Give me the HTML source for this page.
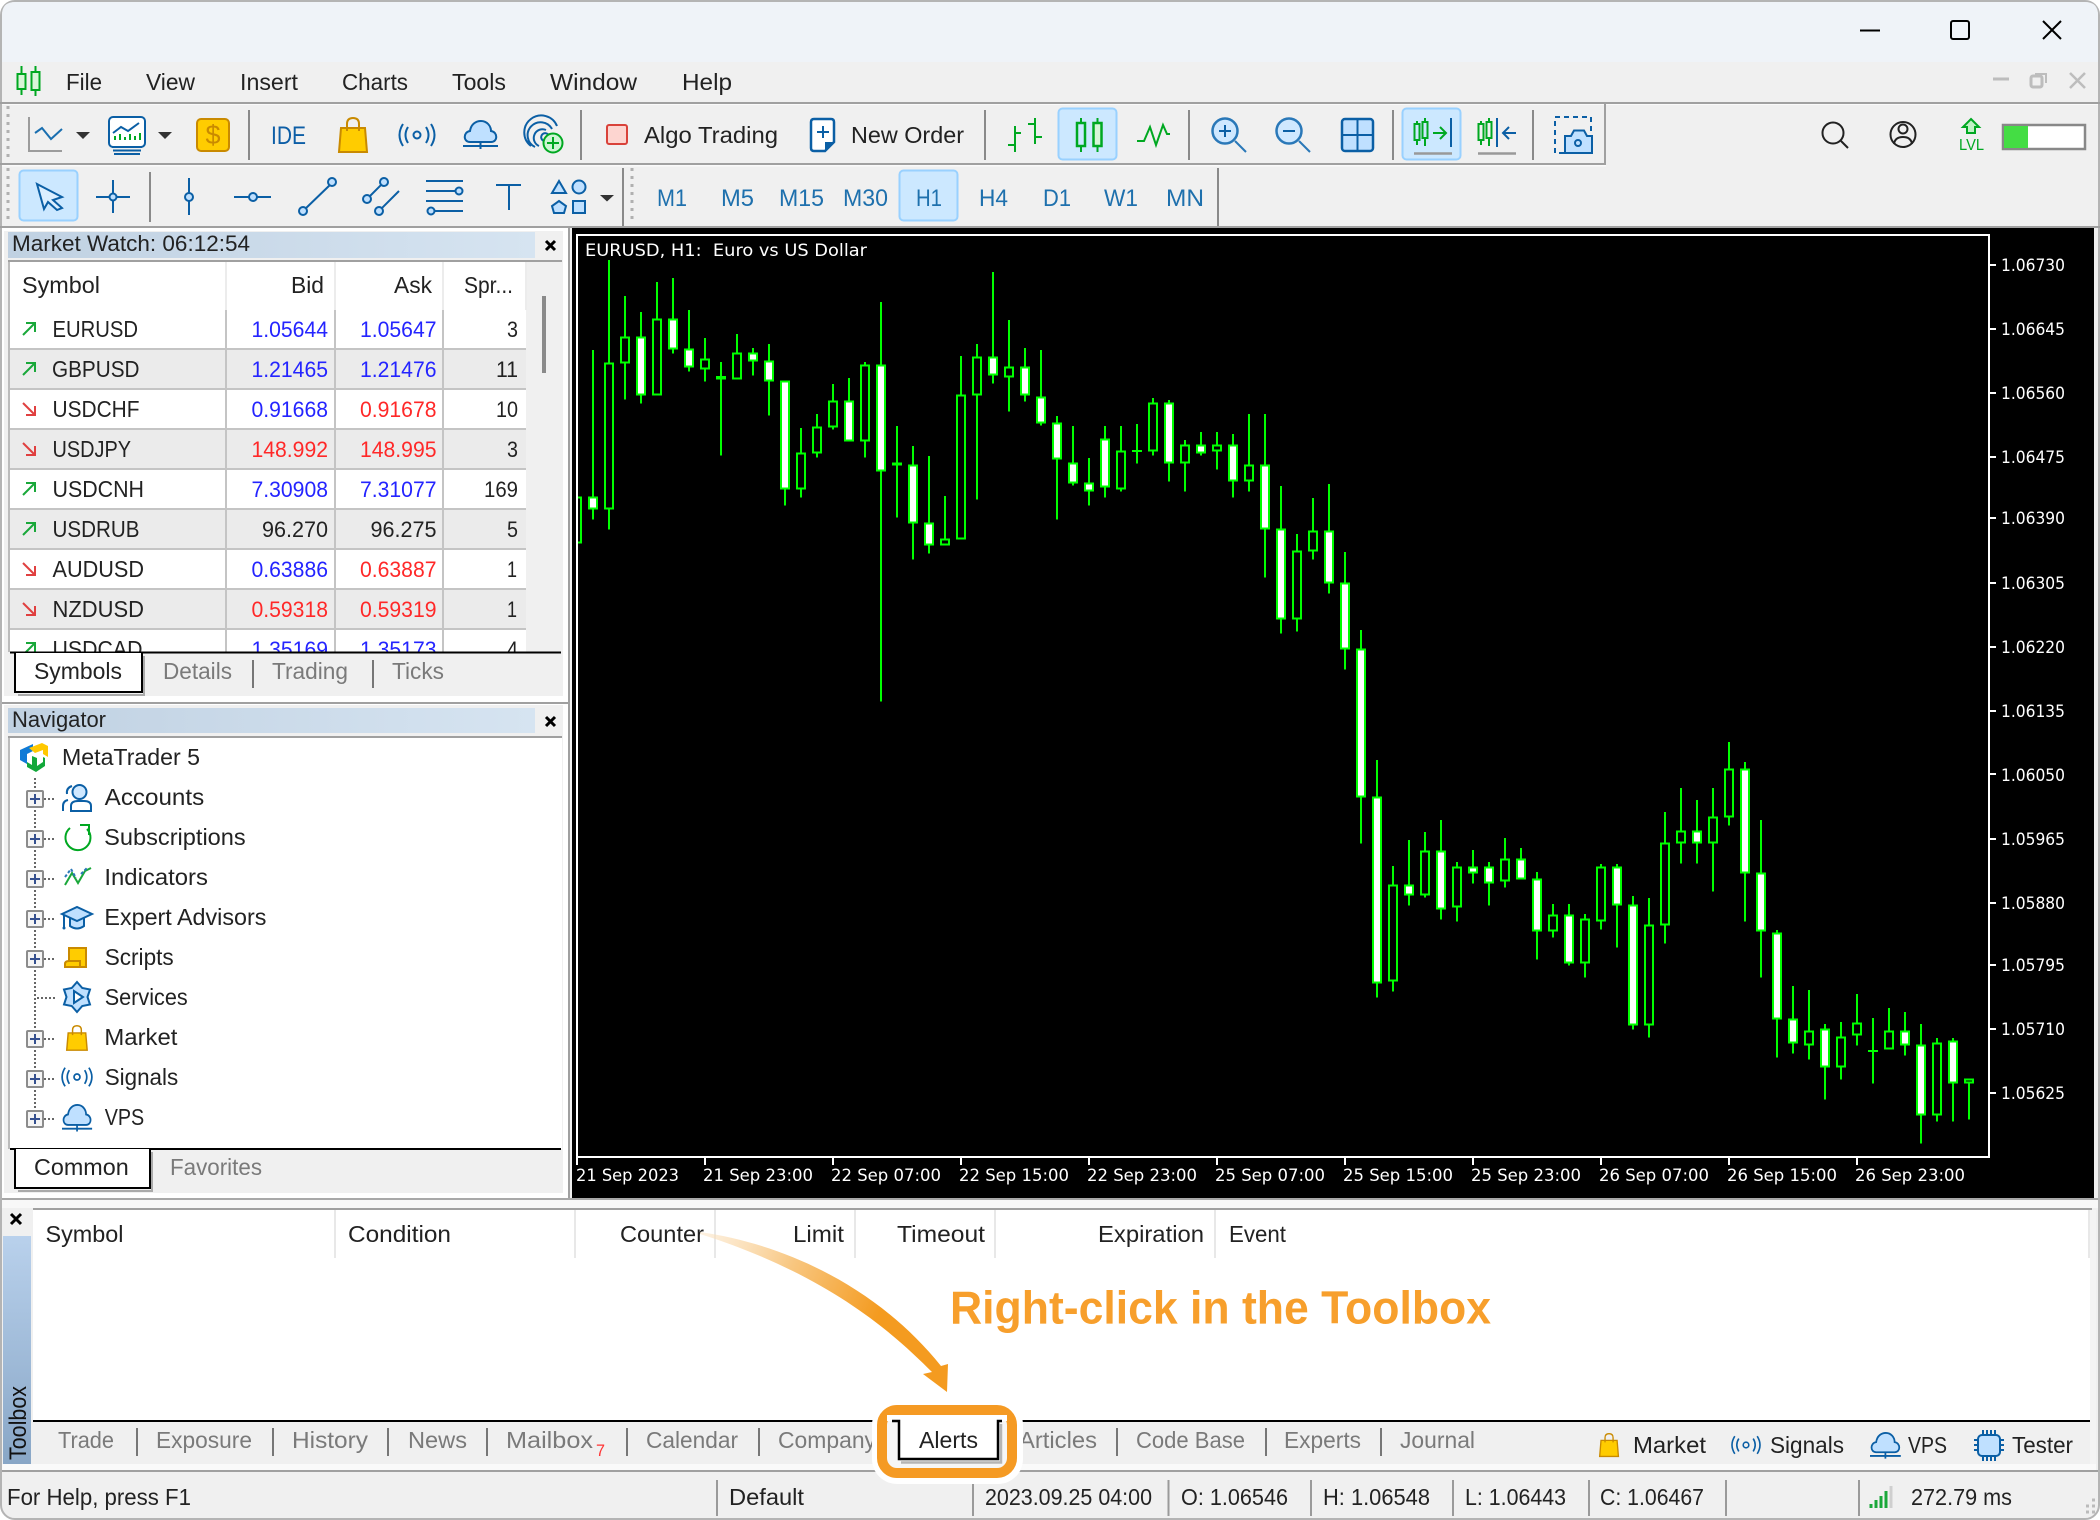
<!DOCTYPE html>
<html lang="en"><head><meta charset="utf-8"><title>MetaTrader 5 - Alerts</title>
<style>
html,body{margin:0;padding:0;background:#fff;width:2100px;height:1520px;overflow:hidden}
svg{display:block}
text{font-family:"Liberation Sans",sans-serif;font-size:23.5px;fill:#222;white-space:pre}
.g{fill:#7a7a7a}
.n{font-size:22px}
.bl{fill:#2424ff}
.rd{fill:#ff2828}
.tf{fill:#1e70ad;font-size:24px}
.ttl{font-size:22px}
.ax{font-family:"DejaVu Sans",sans-serif;font-size:17px;fill:#fff}
.cap{font-size:46px;font-weight:700;fill:#f79f2c}
.i{fill:none;stroke:#0b5fa5;stroke-width:2}
.il{fill:#bfe0ff;stroke:#0b5fa5;stroke-width:2}
.gr{fill:none;stroke:#00a821;stroke-width:2}
.sp{stroke:#8a8a8a;stroke-width:2;fill:none}
.sl{stroke:#a0a0a0;stroke-width:2;fill:none}
</style></head><body>
<svg width="2100" height="1520" viewBox="0 0 2100 1520" xmlns="http://www.w3.org/2000/svg">
<defs>
<linearGradient id="tb" x1="0" x2="1" y1="0" y2="0"><stop offset="0" stop-color="#c0d1e2"/><stop offset="1" stop-color="#d6e4f1"/></linearGradient>
<linearGradient id="sb" x1="0" x2="0" y1="0" y2="1"><stop offset="0" stop-color="#b9d1ec"/><stop offset="1" stop-color="#88a6c6"/></linearGradient>
<linearGradient id="ag" gradientUnits="userSpaceOnUse" x1="700" y1="1233" x2="880" y2="1310"><stop offset="0" stop-color="#fbe3c2" stop-opacity=".5"/><stop offset=".5" stop-color="#f8c67f"/><stop offset="1" stop-color="#f49b20"/></linearGradient>
<g id="cloud"><path d="M7 22C0 22 0 12 7 11C8 4 13 1 18 1C24 1 28 6 28 11C35 12 35 22 28 22Z" class="il"/><path d="M17.5 22V29M0 26H35" class="i"/></g>
<g id="bag"><path d="M3 11H27L29 35H1Z" fill="#ffcc00" stroke="#c98a00" stroke-width="2"/><path d="M9 14V7Q9 1 15 1Q21 1 21 7V14" fill="none" stroke="#c98a00" stroke-width="2"/></g>
<g id="sig"><circle cx="0" cy="0" r="3.5" class="i"/><path d="M-9 -8Q-14 0 -9 8M-14 -11Q-21 0 -14 11M9 -8Q14 0 9 8M14 -11Q21 0 14 11" class="i" stroke="#2a78b8"/></g>
<path id="up" d="M1 13L13 1M4 1H13V10" fill="none" stroke="#1aa83a" stroke-width="2"/>
<path id="dn" d="M1 1L13 13M13 4V13H4" fill="none" stroke="#e04040" stroke-width="2"/>
<g id="pb"><rect x="-8" y="-8" width="16" height="16" rx="1" fill="#f4f4f4" stroke="#8c8c8c" stroke-width="2"/><path d="M-5 0H5M0 -5V5" stroke="#35508f" stroke-width="2"/><path d="M9 0H20" stroke="#666" stroke-width="2" stroke-dasharray="2 2"/></g>
</defs>

<!-- window -->
<rect x="1" y="1" width="2098" height="1518" rx="14" fill="#f0f0f0" stroke="#b4b4b4" stroke-width="2"/>
<path d="M2 62V15Q2 2 15 2H2085Q2098 2 2098 15V62Z" fill="#eff3f8"/>

<!-- window controls -->
<path d="M1860 30.500H1880" stroke="#000" stroke-width="2"/>
<rect x="1951" y="21" width="18" height="18" rx="2" fill="none" stroke="#000" stroke-width="2"/>
<path d="M2043 21L2061 39M2061 21L2043 39" stroke="#000" stroke-width="2"/>

<!-- menu -->
<path d="M21.500 66V74M21.500 89V95M35.500 66V72M35.500 90V96" class="gr"/>
<rect x="17.500" y="74" width="8" height="15" fill="#d8f5d8" stroke="#00a821" stroke-width="2"/>
<rect x="31.500" y="72" width="8" height="18" fill="#d8f5d8" stroke="#00a821" stroke-width="2"/>
<text x="66" y="90" textLength="36" lengthAdjust="spacingAndGlyphs">File</text>
<text x="146" y="90" textLength="49" lengthAdjust="spacingAndGlyphs">View</text>
<text x="240" y="90" textLength="58" lengthAdjust="spacingAndGlyphs">Insert</text>
<text x="342" y="90" textLength="66" lengthAdjust="spacingAndGlyphs">Charts</text>
<text x="452" y="90" textLength="54" lengthAdjust="spacingAndGlyphs">Tools</text>
<text x="550" y="90" textLength="87" lengthAdjust="spacingAndGlyphs">Window</text>
<text x="682" y="90" textLength="50" lengthAdjust="spacingAndGlyphs">Help</text>
<path d="M1993 79H2009" stroke="#bdbdbd" stroke-width="3"/>
<rect x="2031" y="76" width="11" height="11" rx="2" fill="none" stroke="#bdbdbd" stroke-width="3"/><path d="M2035 74H2046V83" fill="none" stroke="#bdbdbd" stroke-width="2"/>
<path d="M2070 73L2085 88M2085 73L2070 88" stroke="#bdbdbd" stroke-width="2.500"/>
<rect x="0" y="102" width="2100" height="2" fill="#a0a0a0"/><rect x="2" y="104" width="2096" height="1" fill="#fafafa"/>

<!-- toolbar 1 -->
<path d="M8 106V160M8 168V222" stroke="#b0b0b0" stroke-width="3" stroke-dasharray="3 5" fill="none"/>
<path d="M29 117V151H62" fill="none" stroke="#9c9c9c" stroke-width="2"/>
<path d="M35 133L42 128L51 139L62 129" fill="none" stroke="#1a6fb0" stroke-width="2"/>
<path d="M76 132H90L83 139Z" fill="#333"/>
<rect x="109" y="117" width="36" height="30" rx="4" fill="#fff" stroke="#0b5fa5" stroke-width="2"/>
<path d="M113 133L121 127L128 131L139 123" fill="none" stroke="#0b5fa5" stroke-width="2"/>
<path d="M115 140V136M120 140V134M125 140V137M130 140V134M135 140V136M140 140V133" stroke="#00a821" stroke-width="2"/>
<path d="M112 147H142M113 150.500H141M114 154H140" stroke="#0b5fa5" stroke-width="2"/>
<path d="M158 132H172L165 139Z" fill="#333"/>
<rect x="197" y="119" width="32" height="32" rx="4" fill="#ffcc00" stroke="#c98a00" stroke-width="2"/>
<text x="213" y="144" text-anchor="middle" style="font-size:27px;fill:#c98a00">$</text>
<path d="M249 110V160M581 110V160M985 110V160M1189 110V160M1393 110V160M1533 110V160" class="sp"/>
<text x="271" y="144" textLength="35" lengthAdjust="spacingAndGlyphs" style="fill:#0d5ea6;font-size:25px">IDE</text>
<use href="#bag" transform="translate(338,117)"/>
<use href="#sig" transform="translate(417,135)"/>
<use href="#cloud" transform="translate(463,120)"/>
<path d="M531 146A17 17 0 1 1 557 126M535 147A13 13 0 1 1 552 129M539 146A8 8 0 1 1 546 130M544 141A4 4 0 1 1 549 136" class="i" stroke="#2a78b8"/>
<circle cx="553" cy="143" r="9.500" fill="#cff5d5" stroke="#00a821" stroke-width="2"/><path d="M547 143H559M553 137V149" stroke="#00a821" stroke-width="2"/>
<rect x="607" y="125" width="20" height="19" rx="2" fill="#fdd5d0" stroke="#d9423a" stroke-width="2"/>
<text x="644" y="143" textLength="134" lengthAdjust="spacingAndGlyphs">Algo Trading</text>
<path d="M814 119H831Q834 119 834 122V142L825 151H814Q811 151 811 148V122Q811 119 814 119Z" fill="#fff" stroke="#0b5fa5" stroke-width="2.500"/>
<path d="M825 151L834 142H825Z" fill="#0b5fa5"/>
<path d="M817 132H829M823 126V138" class="i"/>
<text x="851" y="143" textLength="113" lengthAdjust="spacingAndGlyphs">New Order</text>
<path d="M1015 126V152M1008 145H1015M1015 133H1021M1035 118V144M1028 124H1035M1035 137H1042" class="gr"/>
<rect x="1058.500" y="108.500" width="58" height="51" rx="4" fill="#cce8ff" stroke="#99d1ff" stroke-width="2"/>
<path d="M1081 118V123M1081 146V152M1097.500 118V123M1097.500 146V152" class="gr"/>
<rect x="1077" y="123" width="8" height="23" fill="none" stroke="#00a821" stroke-width="2.500"/>
<rect x="1093.500" y="123" width="8" height="23" fill="#d8f5d8" stroke="#00a821" stroke-width="2.500"/>
<path d="M1137 141H1144L1150 127L1156 145L1163 125L1167 134H1170" class="gr"/>
<circle cx="1225" cy="131" r="12.500" fill="#cfe8ff" stroke="#2a78b8" stroke-width="2.500"/><path d="M1219 131H1231M1225 125V137" class="i"/><path d="M1235 141L1246 152" stroke="#2a78b8" stroke-width="2"/>
<circle cx="1289" cy="131" r="12.500" fill="#cfe8ff" stroke="#2a78b8" stroke-width="2.500"/><path d="M1283 131H1295" class="i"/><path d="M1299 141L1310 152" stroke="#2a78b8" stroke-width="2"/>
<rect x="1342" y="119" width="31" height="32" rx="3" fill="#bfe0ff" stroke="#0b5fa5" stroke-width="2.500"/><path d="M1342 135H1373M1357.500 119V151" class="i"/>
<rect x="1402.500" y="108.500" width="58" height="51" rx="4" fill="#cce8ff" stroke="#99d1ff" stroke-width="2"/>
<path d="M1417 121V145M1425 118V146" class="gr"/>
<rect x="1414.500" y="124" width="5" height="16" fill="#cce8ff" stroke="#00a821" stroke-width="2"/><rect x="1422.500" y="122" width="5" height="16" fill="#cce8ff" stroke="#00a821" stroke-width="2"/>
<path d="M1433 133H1445M1440 127L1446 133L1440 139" class="gr"/><path d="M1451 118V147" class="i"/><path d="M1414 153.500H1452" stroke="#999" stroke-width="2.500"/>
<path d="M1481 121V145M1489 118V146" class="gr"/>
<rect x="1478.500" y="124" width="5" height="16" fill="#f0f0f0" stroke="#00a821" stroke-width="2"/><rect x="1486.500" y="122" width="5" height="16" fill="#f0f0f0" stroke="#00a821" stroke-width="2"/>
<path d="M1497 118V147M1516 133H1503M1509 127L1503 133L1509 139" class="i"/><path d="M1478 153.500H1516" stroke="#999" stroke-width="2.500"/>
<rect x="1555" y="117" width="36" height="36" fill="none" stroke="#0b5fa5" stroke-width="2" stroke-dasharray="5 4"/>
<path d="M1565 136H1571L1574 130.500H1584L1587 136H1592V153H1565Z" class="il" stroke-width="2.500"/><circle cx="1578" cy="143" r="3" class="i"/>
<path d="M1605 104V165" stroke="#a0a0a0" stroke-width="2"/><rect x="0" y="163" width="1606" height="2" fill="#a0a0a0"/><rect x="2" y="165" width="1604" height="1.500" fill="#fafafa"/>
<circle cx="1833" cy="133" r="10.500" fill="none" stroke="#222" stroke-width="2"/><path d="M1841 141L1848 148" stroke="#222" stroke-width="2"/>
<circle cx="1903" cy="134.500" r="12.500" fill="none" stroke="#222" stroke-width="2"/><circle cx="1903" cy="129" r="4.500" fill="none" stroke="#222" stroke-width="2"/><path d="M1894 144Q1895 137 1903 137Q1911 137 1912 144" fill="none" stroke="#222" stroke-width="2"/>
<path d="M1971 119L1979 127H1975V133H1967V127H1963Z" fill="#bff2c5" stroke="#00a821" stroke-width="2"/>
<text x="1959" y="150" textLength="25" lengthAdjust="spacingAndGlyphs" style="font-size:16px;fill:#00a821">LVL</text>
<rect x="2003" y="125" width="82" height="24" fill="#fff" stroke="#888" stroke-width="2.500"/><rect x="2004" y="126" width="24" height="22" fill="#44dd44"/>

<!-- toolbar 2 -->
<rect x="19.500" y="170.500" width="58" height="50" rx="4" fill="#cce8ff" stroke="#99d1ff" stroke-width="2"/>
<path d="M37 184L62 197L53 200L62 208L57 210L48 202L44 209Z" fill="#dcefff" stroke="#0b5fa5" stroke-width="2"/>
<path d="M96 197H130M113 180V213" class="i"/><circle cx="113" cy="197" r="3.500" class="il"/>
<path d="M150 172V222" class="sp"/>
<path d="M189 178V215" class="i"/><circle cx="189" cy="197" r="4" class="il"/>
<path d="M234 197H271" class="i"/><circle cx="253" cy="197" r="4" class="il"/>
<path d="M303 211L332 183" class="i"/><circle cx="303" cy="211" r="4" class="il"/><circle cx="332" cy="182" r="4" class="il"/>
<path d="M367 199L384 182M379 211L399 191" class="i"/><circle cx="367" cy="199" r="4" class="il"/><circle cx="384" cy="182" r="4" class="il"/><circle cx="379" cy="211" r="4" class="il"/>
<path d="M426 181H463M426 191H455M426 201H463M435 211H463" class="i"/><circle cx="459" cy="191" r="3.500" class="il"/><circle cx="431" cy="211" r="3.500" class="il"/>
<path d="M496 185H521M509 185V210" class="i"/>
<path d="M552 193H566L559 181Z" class="il"/><ellipse cx="579" cy="187" rx="6.500" ry="6.500" class="il"/><path d="M559 201L566 206L564 213H554L552 206Z" class="il"/><rect x="573" y="201" width="12" height="12" class="il"/>
<path d="M600 195H614L607 201.500Z" fill="#333"/>
<path d="M623 168V226" class="sp"/>
<path d="M632 168V224" stroke="#b0b0b0" stroke-width="3" stroke-dasharray="3 5" fill="none"/>
<rect x="899.500" y="170.500" width="58" height="50" rx="4" fill="#cce8ff" stroke="#99d1ff" stroke-width="2"/>
<text class="tf" x="657" y="206" textLength="30" lengthAdjust="spacingAndGlyphs">M1</text>
<text class="tf" x="721" y="206" textLength="33" lengthAdjust="spacingAndGlyphs">M5</text>
<text class="tf" x="779" y="206" textLength="45" lengthAdjust="spacingAndGlyphs">M15</text>
<text class="tf" x="843" y="206" textLength="45" lengthAdjust="spacingAndGlyphs">M30</text>
<text class="tf" x="916" y="206" textLength="26" lengthAdjust="spacingAndGlyphs">H1</text>
<text class="tf" x="979" y="206" textLength="29" lengthAdjust="spacingAndGlyphs">H4</text>
<text class="tf" x="1043" y="206" textLength="28" lengthAdjust="spacingAndGlyphs">D1</text>
<text class="tf" x="1104" y="206" textLength="34" lengthAdjust="spacingAndGlyphs">W1</text>
<text class="tf" x="1166" y="206" textLength="38" lengthAdjust="spacingAndGlyphs">MN</text>
<path d="M1218 168V226" class="sp" stroke="#a0a0a0"/>
<rect x="0" y="226" width="2100" height="2" fill="#a0a0a0"/>

<!-- left column -->
<rect x="2" y="228" width="567" height="972" fill="#fff"/>
<path d="M569 228V1199" stroke="#a0a0a0" stroke-width="2"/>
<rect x="4" y="231" width="559" height="465" fill="#f0f0f0"/>
<rect x="8" y="232" width="527" height="26" fill="url(#tb)"/>
<text class="ttl" x="12" y="251" textLength="238" lengthAdjust="spacingAndGlyphs">Market Watch: 06:12:54</text>
<path d="M546 241L555 250M555 241L546 250" stroke="#000" stroke-width="3"/>
<rect x="8" y="260" width="554" height="2" fill="#a0a0a0"/>
<rect x="9" y="262" width="517" height="390" fill="#fff"/>
<path d="M9 262V652" stroke="#bbb" stroke-width="2"/>
<rect x="10" y="350" width="516" height="38" fill="#ebebeb"/><rect x="10" y="430" width="516" height="38" fill="#ebebeb"/><rect x="10" y="510" width="516" height="38" fill="#ebebeb"/><rect x="10" y="590" width="516" height="38" fill="#ebebeb"/>
<path d="M10 349H526M10 389H526M10 429H526M10 469H526M10 509H526M10 549H526M10 589H526M10 629H526M226 310V652M335 310V652M443 310V652" stroke="#c4c4c4" stroke-width="2"/>
<path d="M226 262V310M335 262V310M443 262V310M526 262V310" stroke="#ececec" stroke-width="2"/>
<rect x="542" y="296" width="4" height="77" fill="#8a8a8a"/>
<text x="22" y="293" textLength="78" lengthAdjust="spacingAndGlyphs">Symbol</text>
<text x="291" y="293" textLength="33" lengthAdjust="spacingAndGlyphs">Bid</text>
<text x="394" y="293" textLength="38" lengthAdjust="spacingAndGlyphs">Ask</text>
<text x="464" y="293" textLength="49" lengthAdjust="spacingAndGlyphs">Spr...</text>

<use href="#up" transform="translate(22,322)"/><use href="#up" transform="translate(22,362)"/><use href="#dn" transform="translate(22,402)"/><use href="#dn" transform="translate(22,442)"/><use href="#up" transform="translate(22,482)"/><use href="#up" transform="translate(22,522)"/><use href="#dn" transform="translate(22,562)"/><use href="#dn" transform="translate(22,602)"/><use href="#up" transform="translate(22,642)"/>

<text x="52.500" y="337" textLength="85.500" lengthAdjust="spacingAndGlyphs">EURUSD</text>
<text class="n bl" x="251.500" y="337" textLength="76.500" lengthAdjust="spacingAndGlyphs">1.05644</text>
<text class="n bl" x="360" y="337" textLength="76.500" lengthAdjust="spacingAndGlyphs">1.05647</text>
<text class="n" x="507" y="337" textLength="11" lengthAdjust="spacingAndGlyphs">3</text>
<text x="52" y="377" textLength="87.500" lengthAdjust="spacingAndGlyphs">GBPUSD</text>
<text class="n bl" x="251.500" y="377" textLength="76.500" lengthAdjust="spacingAndGlyphs">1.21465</text>
<text class="n bl" x="360" y="377" textLength="76.500" lengthAdjust="spacingAndGlyphs">1.21476</text>
<text class="n" x="496" y="377" textLength="22" lengthAdjust="spacingAndGlyphs">11</text>
<text x="52.500" y="417" textLength="87" lengthAdjust="spacingAndGlyphs">USDCHF</text>
<text class="n bl" x="251.500" y="417" textLength="76.500" lengthAdjust="spacingAndGlyphs">0.91668</text>
<text class="n rd" x="360" y="417" textLength="76.500" lengthAdjust="spacingAndGlyphs">0.91678</text>
<text class="n" x="496" y="417" textLength="22" lengthAdjust="spacingAndGlyphs">10</text>
<text x="52.500" y="457" textLength="78.500" lengthAdjust="spacingAndGlyphs">USDJPY</text>
<text class="n rd" x="251.500" y="457" textLength="76.500" lengthAdjust="spacingAndGlyphs">148.992</text>
<text class="n rd" x="360" y="457" textLength="76.500" lengthAdjust="spacingAndGlyphs">148.995</text>
<text class="n" x="507" y="457" textLength="11" lengthAdjust="spacingAndGlyphs">3</text>
<text x="52.500" y="497" textLength="91.500" lengthAdjust="spacingAndGlyphs">USDCNH</text>
<text class="n bl" x="251.500" y="497" textLength="76.500" lengthAdjust="spacingAndGlyphs">7.30908</text>
<text class="n bl" x="360" y="497" textLength="76.500" lengthAdjust="spacingAndGlyphs">7.31077</text>
<text class="n" x="484" y="497" textLength="34" lengthAdjust="spacingAndGlyphs">169</text>
<text x="52.500" y="537" textLength="87" lengthAdjust="spacingAndGlyphs">USDRUB</text>
<text class="n" x="262" y="537" textLength="66" lengthAdjust="spacingAndGlyphs">96.270</text>
<text class="n" x="370.500" y="537" textLength="66" lengthAdjust="spacingAndGlyphs">96.275</text>
<text class="n" x="507" y="537" textLength="11" lengthAdjust="spacingAndGlyphs">5</text>
<text x="52.500" y="577" textLength="91.500" lengthAdjust="spacingAndGlyphs">AUDUSD</text>
<text class="n bl" x="251.500" y="577" textLength="76.500" lengthAdjust="spacingAndGlyphs">0.63886</text>
<text class="n rd" x="360" y="577" textLength="76.500" lengthAdjust="spacingAndGlyphs">0.63887</text>
<text class="n" x="507" y="577" textLength="10" lengthAdjust="spacingAndGlyphs">1</text>
<text x="52.500" y="617" textLength="91.500" lengthAdjust="spacingAndGlyphs">NZDUSD</text>
<text class="n rd" x="251.500" y="617" textLength="76.500" lengthAdjust="spacingAndGlyphs">0.59318</text>
<text class="n rd" x="360" y="617" textLength="76.500" lengthAdjust="spacingAndGlyphs">0.59319</text>
<text class="n" x="507" y="617" textLength="10" lengthAdjust="spacingAndGlyphs">1</text>
<text x="52.500" y="657" textLength="90" lengthAdjust="spacingAndGlyphs">USDCAD</text>
<text class="n bl" x="251.500" y="657" textLength="76.500" lengthAdjust="spacingAndGlyphs">1.35169</text>
<text class="n bl" x="360" y="657" textLength="76.500" lengthAdjust="spacingAndGlyphs">1.35173</text>
<text class="n" x="507" y="657" textLength="11" lengthAdjust="spacingAndGlyphs">4</text>

<rect x="9" y="652" width="553" height="44" fill="#f0f0f0"/>
<rect x="10" y="651.500" width="551" height="2" fill="#000"/>
<rect x="15" y="653" width="127" height="39" fill="#fff"/>
<path d="M18 695H144V656" fill="none" stroke="#aaa" stroke-width="2"/>
<path d="M15 652V692H142V652" fill="none" stroke="#000" stroke-width="2"/>
<text x="34" y="679" textLength="88" lengthAdjust="spacingAndGlyphs">Symbols</text>
<text class="g" x="163" y="679" textLength="69" lengthAdjust="spacingAndGlyphs">Details</text>
<text class="g" x="272" y="679" textLength="76" lengthAdjust="spacingAndGlyphs">Trading</text>
<text class="g" x="392" y="679" textLength="52" lengthAdjust="spacingAndGlyphs">Ticks</text>
<path d="M253 660V688M373 660V688" stroke="#777" stroke-width="2"/>

<!-- navigator -->
<rect x="2" y="702" width="567" height="2" fill="#a0a0a0"/>
<rect x="4" y="705" width="559" height="488" fill="#f0f0f0"/>
<rect x="8" y="708" width="527" height="25" fill="url(#tb)"/>
<text class="ttl" x="12" y="727" textLength="94" lengthAdjust="spacingAndGlyphs">Navigator</text>
<path d="M546 717L555 726M555 717L546 726" stroke="#000" stroke-width="3"/>
<rect x="8" y="736" width="554" height="2" fill="#a0a0a0"/>
<rect x="9" y="738" width="553" height="411" fill="#fff"/>
<path d="M9 738V1149" stroke="#bbb" stroke-width="2"/>
<path d="M20 750L33 744V751L27 754V764L20 760Z" fill="#0f7ad6"/>
<path d="M29 748L42 743L48 746V757L43 754V750L35 753Z" fill="#ffc800"/>
<path d="M32 756L37 758V766L43 762V757L45 758V766L36 772L27 767V762L32 765Z" fill="#12a83a"/>
<text x="62" y="765" textLength="138" lengthAdjust="spacingAndGlyphs">MetaTrader 5</text>
<path d="M35 778V1112" stroke="#666" stroke-width="2" stroke-dasharray="2 2"/>
<path d="M37 998H56" stroke="#666" stroke-width="2" stroke-dasharray="2 2"/>
<use href="#pb" transform="translate(35,799)"/><use href="#pb" transform="translate(35,839)"/><use href="#pb" transform="translate(35,879)"/><use href="#pb" transform="translate(35,919)"/><use href="#pb" transform="translate(35,959)"/><use href="#pb" transform="translate(35,1039)"/><use href="#pb" transform="translate(35,1079)"/><use href="#pb" transform="translate(35,1119)"/>

<circle cx="79.500" cy="792" r="7" fill="#cfe8ff" stroke="#0b5fa5" stroke-width="2"/>
<path d="M71 811V806Q71 801 78 801H84Q91 801 91 806V811Z" fill="#fff" stroke="#0b5fa5" stroke-width="2"/>
<path d="M72 786Q66 788 67 794M63 811V806Q63 801 68 800" fill="none" stroke="#0b5fa5" stroke-width="2"/>
<path d="M70 828A12.500 12.500 0 1 0 87 829M80 825H89V835" class="gr" stroke="#1aa83a"/>
<path d="M65 885L72 873L78 883L85 871L91 868" fill="none" stroke="#1aa83a" stroke-width="2"/><path d="M65 877L71 869L76 878M81 874L88 867" fill="none" stroke="#2a78b8" stroke-width="2" stroke-dasharray="3 2"/>
<path d="M70 918V926Q77 931 84 926V918" class="il"/><path d="M62 914L77 907L92 914L77 921Z" class="il"/><path d="M64 915V928" class="i"/><circle cx="64" cy="928" r="1.500" fill="#0b5fa5"/>
<path d="M69 948H86V967H69Z" fill="#ffcc00" stroke="#c98a00" stroke-width="2"/><path d="M65 967V964Q65 961 69 961H80V967Z" fill="#ffcc00" stroke="#c98a00" stroke-width="2"/>
<path d="M77 982L82.250 988L90 989.500L87.500 997L90 1004.500L82.250 1006L77 1012L71.750 1006L64 1004.500L66.500 997L64 989.500L71.750 988Z" class="il"/><path d="M74 991V1003L83 997Z" fill="#fff" stroke="#0b5fa5" stroke-width="2"/>
<use href="#bag" transform="translate(66,1025) scale(.73,.72)"/>
<use href="#sig" transform="translate(77,1077) scale(.85)"/>
<use href="#cloud" transform="translate(62,1104) scale(.86,.95)"/>
<text x="104.700" y="805" textLength="99.500" lengthAdjust="spacingAndGlyphs">Accounts</text>
<text x="104.200" y="845" textLength="141.500" lengthAdjust="spacingAndGlyphs">Subscriptions</text>
<text x="104.400" y="885" textLength="103.500" lengthAdjust="spacingAndGlyphs">Indicators</text>
<text x="104.400" y="925" textLength="162" lengthAdjust="spacingAndGlyphs">Expert Advisors</text>
<text x="104.700" y="965" textLength="69" lengthAdjust="spacingAndGlyphs">Scripts</text>
<text x="104.700" y="1005" textLength="83" lengthAdjust="spacingAndGlyphs">Services</text>
<text x="104.400" y="1045" textLength="73" lengthAdjust="spacingAndGlyphs">Market</text>
<text x="104.700" y="1085" textLength="73.500" lengthAdjust="spacingAndGlyphs">Signals</text>
<text x="104.700" y="1125" textLength="39.500" lengthAdjust="spacingAndGlyphs">VPS</text>
<rect x="10" y="1148" width="551" height="2" fill="#000"/>
<rect x="15" y="1149" width="135" height="39" fill="#fff"/>
<path d="M18 1191H152V1152" fill="none" stroke="#aaa" stroke-width="2"/>
<path d="M15 1149V1188H150V1149" fill="none" stroke="#000" stroke-width="2"/>
<text x="34" y="1175" textLength="94.700" lengthAdjust="spacingAndGlyphs">Common</text>
<text class="g" x="170" y="1175" textLength="92" lengthAdjust="spacingAndGlyphs">Favorites</text>

<!-- chart -->
<rect x="572" y="228" width="1522" height="970" fill="#000"/>
<g shape-rendering="crispEdges">
<g transform="translate(570,230) scale(.33333)">
<path d="M69 360V868M117 90V898M165 198V508M213 246V520M261 156V496M309 144V370M357 240V424M405 324V454M453 396V676M501 312V448M549 354V436M597 342V556M645 452V826M693 594V802M741 552V682M789 462V598M837 444V634M885 396V682M933 216V1414M981 588V862M1029 648V988M1077 678V970M1125 798V946M1173 378V928M1221 342V808M1269 126V460M1317 270V544M1365 354V514M1413 360V586M1461 558V868" stroke="#00ff00" stroke-width="6" fill="none"/>
<path d="M57 803h24v32h-24zM201 323h24v170h-24zM297 269h24v86h-24zM345 359h24v50h-24zM537 371h24v20h-24zM585 395h24v56h-24zM633 455h24v320h-24zM825 515h24v116h-24zM921 407h24v314h-24zM1017 707h24v170h-24zM1065 881h24v62h-24zM1257 383h24v50h-24zM1353 413h24v80h-24zM1401 503h24v74h-24zM1449 581h24v104h-24z" fill="#fff" stroke="#00ff00" stroke-width="6"/>
<path d="M105 401h24v434h-24zM153 323h24v74h-24zM249 269h24v224h-24zM393 389h24v26h-24zM489 371h24v74h-24zM681 671h24v104h-24zM729 593h24v74h-24zM777 515h24v74h-24zM873 407h24v224h-24zM1113 929h24v14h-24zM1161 497h24v428h-24zM1209 383h24v110h-24zM1305 413h24v26h-24zM24 803H33V938H24" fill="#000" stroke="#00ff00" stroke-width="6"/>
<path d="M438 438h30v10h-30zM966 698h30v8h-30z" fill="#00ff00"/>
</g>
<g transform="translate(1070,230) scale(.33333)">
<path d="M9 588V766M57 684V826M105 588V802M153 588V784M201 582V700M249 504V676M297 510V754M345 630V784M393 606V676M441 606V718M489 612V802M537 552V784M585 552V1042M633 768V1210M681 912V1204M729 804V988M777 762V1090M825 966V1318" stroke="#00ff00" stroke-width="6" fill="none"/>
<path d="M-3 701h24v56h-24zM45 761h24v20h-24zM93 629h24v140h-24zM285 521h24v176h-24zM381 647h24v20h-24zM477 647h24v104h-24zM573 707h24v188h-24zM621 899h24v266h-24zM765 905h24v152h-24zM813 1061h24v194h-24z" fill="#fff" stroke="#00ff00" stroke-width="6"/>
<path d="M141 665h24v110h-24zM237 521h24v140h-24zM333 647h24v50h-24zM429 647h24v14h-24zM525 707h24v44h-24zM669 965h24v200h-24zM717 905h24v56h-24z" fill="#000" stroke="#00ff00" stroke-width="6"/>
<path d="M186 660h30v6h-30z" fill="#00ff00"/>
</g>
<g transform="translate(1300,720) scale(.33333)">
<path d="M183 -270V370M231 120V832M279 438V814M327 360V556M375 336V532M423 300V598M471 426V604M519 390V490M567 426V556M615 354V502M663 384V478M711 456V718M759 552V652M807 552V736M855 582V772M903 432V628M951 432V682M999 528V928M1047 534V952M1095 276V670M1143 204V430M1191 240V430M1239 204V514M1287 66V316M1335 126V604M1383 300V772M1431 630V1012M1479 798V1000" stroke="#00ff00" stroke-width="6" fill="none"/>
<path d="M171 -211h24v440h-24zM219 233h24v554h-24zM315 497h24v26h-24zM411 395h24v170h-24zM507 443h24v14h-24zM555 443h24v44h-24zM651 419h24v56h-24zM699 479h24v152h-24zM795 587h24v140h-24zM939 443h24v110h-24zM987 557h24v356h-24zM1179 335h24v32h-24zM1323 149h24v308h-24zM1371 461h24v170h-24zM1419 641h24v254h-24zM1467 899h24v68h-24z" fill="#fff" stroke="#00ff00" stroke-width="6"/>
<path d="M267 497h24v284h-24zM363 395h24v128h-24zM459 443h24v116h-24zM603 419h24v62h-24zM747 587h24v44h-24zM843 599h24v128h-24zM891 443h24v158h-24zM1035 617h24v296h-24zM1083 371h24v242h-24zM1131 335h24v32h-24zM1227 293h24v74h-24zM1275 149h24v140h-24z" fill="#000" stroke="#00ff00" stroke-width="6"/>
</g>
<g transform="translate(1700,720) scale(.33333)">
<path d="M327 810V1018M375 912V1138M423 906V1078M471 822V976M519 894V1090M567 864V988M615 876V1006M663 912V1270M711 954V1204M759 954V1204M807 1076V1198" stroke="#00ff00" stroke-width="6" fill="none"/>
<path d="M363 929h24v110h-24zM603 935h24v38h-24zM651 977h24v206h-24zM747 965h24v122h-24z" fill="#fff" stroke="#00ff00" stroke-width="6"/>
<path d="M315 935h24v38h-24zM411 953h24v86h-24zM459 911h24v32h-24zM555 935h24v50h-24zM699 971h24v212h-24zM795 1079h24v8h-24z" fill="#000" stroke="#00ff00" stroke-width="6"/>
<path d="M504 990h30v6h-30z" fill="#00ff00"/>
</g>
<rect x="577" y="235" width="1412" height="922" fill="none" stroke="#fff" stroke-width="2"/>
<path d="M1990 265H1996M1990 329H1996M1990 393H1996M1990 457H1996M1990 518H1996M1990 583H1996M1990 647H1996M1990 711H1996M1990 774H1996M1990 839H1996M1990 903H1996M1990 965H1996M1990 1029H1996M1990 1093H1996" stroke="#fff" stroke-width="2"/>
<path d="M577 1158V1165M705 1158V1165M833 1158V1165M961 1158V1165M1089 1158V1165M1217 1158V1165M1345 1158V1165M1473 1158V1165M1601 1158V1165M1729 1158V1165M1857 1158V1165" stroke="#fff" stroke-width="2"/>
</g>
<text class="ax" x="585" y="256" textLength="282" lengthAdjust="spacingAndGlyphs">EURUSD, H1:  Euro vs US Dollar</text>
<text class="ax" x="2001" y="271" textLength="64" lengthAdjust="spacingAndGlyphs">1.06730</text>
<text class="ax" x="2001" y="335" textLength="64" lengthAdjust="spacingAndGlyphs">1.06645</text>
<text class="ax" x="2001" y="399" textLength="64" lengthAdjust="spacingAndGlyphs">1.06560</text>
<text class="ax" x="2001" y="463" textLength="64" lengthAdjust="spacingAndGlyphs">1.06475</text>
<text class="ax" x="2001" y="524" textLength="64" lengthAdjust="spacingAndGlyphs">1.06390</text>
<text class="ax" x="2001" y="589" textLength="64" lengthAdjust="spacingAndGlyphs">1.06305</text>
<text class="ax" x="2001" y="653" textLength="64" lengthAdjust="spacingAndGlyphs">1.06220</text>
<text class="ax" x="2001" y="717" textLength="64" lengthAdjust="spacingAndGlyphs">1.06135</text>
<text class="ax" x="2001" y="781" textLength="64" lengthAdjust="spacingAndGlyphs">1.06050</text>
<text class="ax" x="2001" y="845" textLength="64" lengthAdjust="spacingAndGlyphs">1.05965</text>
<text class="ax" x="2001" y="909" textLength="64" lengthAdjust="spacingAndGlyphs">1.05880</text>
<text class="ax" x="2001" y="971" textLength="64" lengthAdjust="spacingAndGlyphs">1.05795</text>
<text class="ax" x="2001" y="1035" textLength="64" lengthAdjust="spacingAndGlyphs">1.05710</text>
<text class="ax" x="2001" y="1099" textLength="64" lengthAdjust="spacingAndGlyphs">1.05625</text>
<text class="ax" x="576" y="1181" textLength="103" lengthAdjust="spacingAndGlyphs">21 Sep 2023</text>
<text class="ax" x="703" y="1181" textLength="110" lengthAdjust="spacingAndGlyphs">21 Sep 23:00</text>
<text class="ax" x="831" y="1181" textLength="110" lengthAdjust="spacingAndGlyphs">22 Sep 07:00</text>
<text class="ax" x="959" y="1181" textLength="110" lengthAdjust="spacingAndGlyphs">22 Sep 15:00</text>
<text class="ax" x="1087" y="1181" textLength="110" lengthAdjust="spacingAndGlyphs">22 Sep 23:00</text>
<text class="ax" x="1215" y="1181" textLength="110" lengthAdjust="spacingAndGlyphs">25 Sep 07:00</text>
<text class="ax" x="1343" y="1181" textLength="110" lengthAdjust="spacingAndGlyphs">25 Sep 15:00</text>
<text class="ax" x="1471" y="1181" textLength="110" lengthAdjust="spacingAndGlyphs">25 Sep 23:00</text>
<text class="ax" x="1599" y="1181" textLength="110" lengthAdjust="spacingAndGlyphs">26 Sep 07:00</text>
<text class="ax" x="1727" y="1181" textLength="110" lengthAdjust="spacingAndGlyphs">26 Sep 15:00</text>
<text class="ax" x="1855" y="1181" textLength="110" lengthAdjust="spacingAndGlyphs">26 Sep 23:00</text>

<!-- toolbox -->
<rect x="2" y="1198" width="2096" height="2" fill="#a8a8a8"/>
<rect x="2" y="1200" width="2096" height="8" fill="#f8f8f8"/>
<rect x="33" y="1208" width="2059" height="2" fill="#a0a0a0"/>
<rect x="2" y="1210" width="31" height="260" fill="#f0f0f0"/>
<path d="M11 1214L21 1224M21 1214L11 1224" stroke="#000" stroke-width="3"/>
<rect x="3" y="1236" width="28" height="230" fill="url(#sb)"/>
<text x="26" y="1460" transform="rotate(-90 26 1460)" textLength="74" lengthAdjust="spacingAndGlyphs" style="fill:#111;font-size:24px">Toolbox</text>
<rect x="33" y="1210" width="2057" height="210" fill="#fff"/>
<path d="M335 1210V1258M575 1210V1258M715 1210V1258M855 1210V1258M995 1210V1258M1215 1210V1258M2089 1210V1258" stroke="#e8e8e8" stroke-width="2"/>
<text x="45.500" y="1242" textLength="78" lengthAdjust="spacingAndGlyphs">Symbol</text>
<text x="348" y="1242" textLength="103" lengthAdjust="spacingAndGlyphs">Condition</text>
<text x="620" y="1242" textLength="84" lengthAdjust="spacingAndGlyphs">Counter</text>
<text x="793" y="1242" textLength="51" lengthAdjust="spacingAndGlyphs">Limit</text>
<text x="897" y="1242" textLength="88" lengthAdjust="spacingAndGlyphs">Timeout</text>
<text x="1098" y="1242" textLength="106" lengthAdjust="spacingAndGlyphs">Expiration</text>
<text x="1229" y="1242" textLength="57" lengthAdjust="spacingAndGlyphs">Event</text>
<rect x="33" y="1420" width="2057" height="2" fill="#000"/>
<rect x="33" y="1422" width="2057" height="42" fill="#f0f0f0"/>
<rect x="2090" y="1210" width="6" height="260" fill="#f4f4f4"/>
<rect x="2" y="1464" width="2094" height="6" fill="#fafafa"/>
<rect x="2" y="1470" width="2096" height="2" fill="#a0a0a0"/>
<text class="g" x="58" y="1448" textLength="56" lengthAdjust="spacingAndGlyphs">Trade</text>
<text class="g" x="156" y="1448" textLength="96" lengthAdjust="spacingAndGlyphs">Exposure</text>
<text class="g" x="292" y="1448" textLength="76" lengthAdjust="spacingAndGlyphs">History</text>
<text class="g" x="408" y="1448" textLength="59" lengthAdjust="spacingAndGlyphs">News</text>
<text class="g" x="506" y="1448" textLength="87" lengthAdjust="spacingAndGlyphs">Mailbox</text>
<text x="596" y="1456" textLength="9" lengthAdjust="spacingAndGlyphs" style="font-size:17px;fill:#ff3333">7</text>
<text class="g" x="646" y="1448" textLength="92" lengthAdjust="spacingAndGlyphs">Calendar</text>
<text class="g" x="778" y="1448" textLength="98" lengthAdjust="spacingAndGlyphs">Company</text>
<text class="g" x="1019" y="1448" textLength="78" lengthAdjust="spacingAndGlyphs">Articles</text>
<text class="g" x="1136" y="1448" textLength="109" lengthAdjust="spacingAndGlyphs">Code Base</text>
<text class="g" x="1284" y="1448" textLength="77" lengthAdjust="spacingAndGlyphs">Experts</text>
<text class="g" x="1400" y="1448" textLength="75" lengthAdjust="spacingAndGlyphs">Journal</text>
<path d="M137 1428V1456M273 1428V1456M388 1428V1456M487 1428V1456M627 1428V1456M759 1428V1456M1117 1428V1456M1266 1428V1456M1381 1428V1456" stroke="#777" stroke-width="2"/>
<use href="#bag" transform="translate(1599,1433) scale(.67,.67)"/>
<text x="1633" y="1453" textLength="73" lengthAdjust="spacingAndGlyphs">Market</text>
<use href="#sig" transform="translate(1746,1445) scale(.8)"/>
<text x="1770" y="1453" textLength="74" lengthAdjust="spacingAndGlyphs">Signals</text>
<use href="#cloud" transform="translate(1870,1432) scale(.88,.92)"/>
<text x="1908" y="1453" textLength="39" lengthAdjust="spacingAndGlyphs">VPS</text>
<rect x="1978" y="1435" width="22" height="21" rx="4" class="il"/>
<path d="M1983 1430V1435M1987 1430V1435M1991 1430V1435M1995 1430V1435M1983 1456V1461M1987 1456V1461M1991 1456V1461M1995 1456V1461M1974 1440H1978M1974 1445H1978M1974 1450H1978M2000 1440H2004M2000 1445H2004M2000 1450H2004" class="i" stroke-width="1.500"/>
<text x="2012" y="1453" textLength="61" lengthAdjust="spacingAndGlyphs">Tester</text>

<!-- status bar -->
<text x="7" y="1505" textLength="184" lengthAdjust="spacingAndGlyphs">For Help, press F1</text>
<text x="729" y="1505" textLength="75" lengthAdjust="spacingAndGlyphs">Default</text>
<text x="985" y="1505" textLength="167" lengthAdjust="spacingAndGlyphs">2023.09.25 04:00</text>
<text x="1181" y="1505" textLength="107" lengthAdjust="spacingAndGlyphs">O: 1.06546</text>
<text x="1323" y="1505" textLength="107" lengthAdjust="spacingAndGlyphs">H: 1.06548</text>
<text x="1465" y="1505" textLength="101" lengthAdjust="spacingAndGlyphs">L: 1.06443</text>
<text x="1600" y="1505" textLength="104" lengthAdjust="spacingAndGlyphs">C: 1.06467</text>
<text x="1911" y="1505" textLength="101" lengthAdjust="spacingAndGlyphs">272.79 ms</text>
<path d="M717 1480V1516M973 1480V1516M1168.500 1480V1516M1311 1480V1516M1453 1480V1516M1589 1480V1516M1726 1480V1516M1859 1480V1516" stroke="#9a9a9a" stroke-width="2"/>
<path d="M1871 1508V1504M1876 1508V1500M1881 1508V1496M1886 1508V1491" stroke="#1aa83a" stroke-width="3"/><path d="M1891 1508V1486" stroke="#cfcfcf" stroke-width="3"/>
<path d="M2092 1512h3M2086 1512h3M2092 1506h3M2092 1500h3M2086 1506h3" stroke="#bbb" stroke-width="3"/>

<!-- annotation -->
<rect x="872" y="1400" width="151" height="84" rx="25" fill="#fff"/>
<rect x="882" y="1410" width="130" height="63" rx="15" fill="#f6f6f6" stroke="#f59a23" stroke-width="10"/>
<rect x="887" y="1415" width="120" height="6" fill="#fff"/>
<rect x="899" y="1421" width="98" height="37" fill="#fff"/>
<path d="M892 1421H899V1459H998V1421H1002" fill="none" stroke="#000" stroke-width="2.500"/>
<path d="M901 1462.500H1001V1424" fill="none" stroke="#b5b5b5" stroke-width="2.500"/>
<text x="919" y="1448" textLength="59" lengthAdjust="spacingAndGlyphs">Alerts</text>
<path d="M700 1232C790 1245 880 1290 941 1366L948 1364L947 1392L923 1374L932 1372C895 1335 830 1275 700 1234Z" fill="url(#ag)"/>
<text class="cap" x="950" y="1323.500" textLength="541" lengthAdjust="spacingAndGlyphs">Right-click in the Toolbox</text>
</svg>
</body></html>
